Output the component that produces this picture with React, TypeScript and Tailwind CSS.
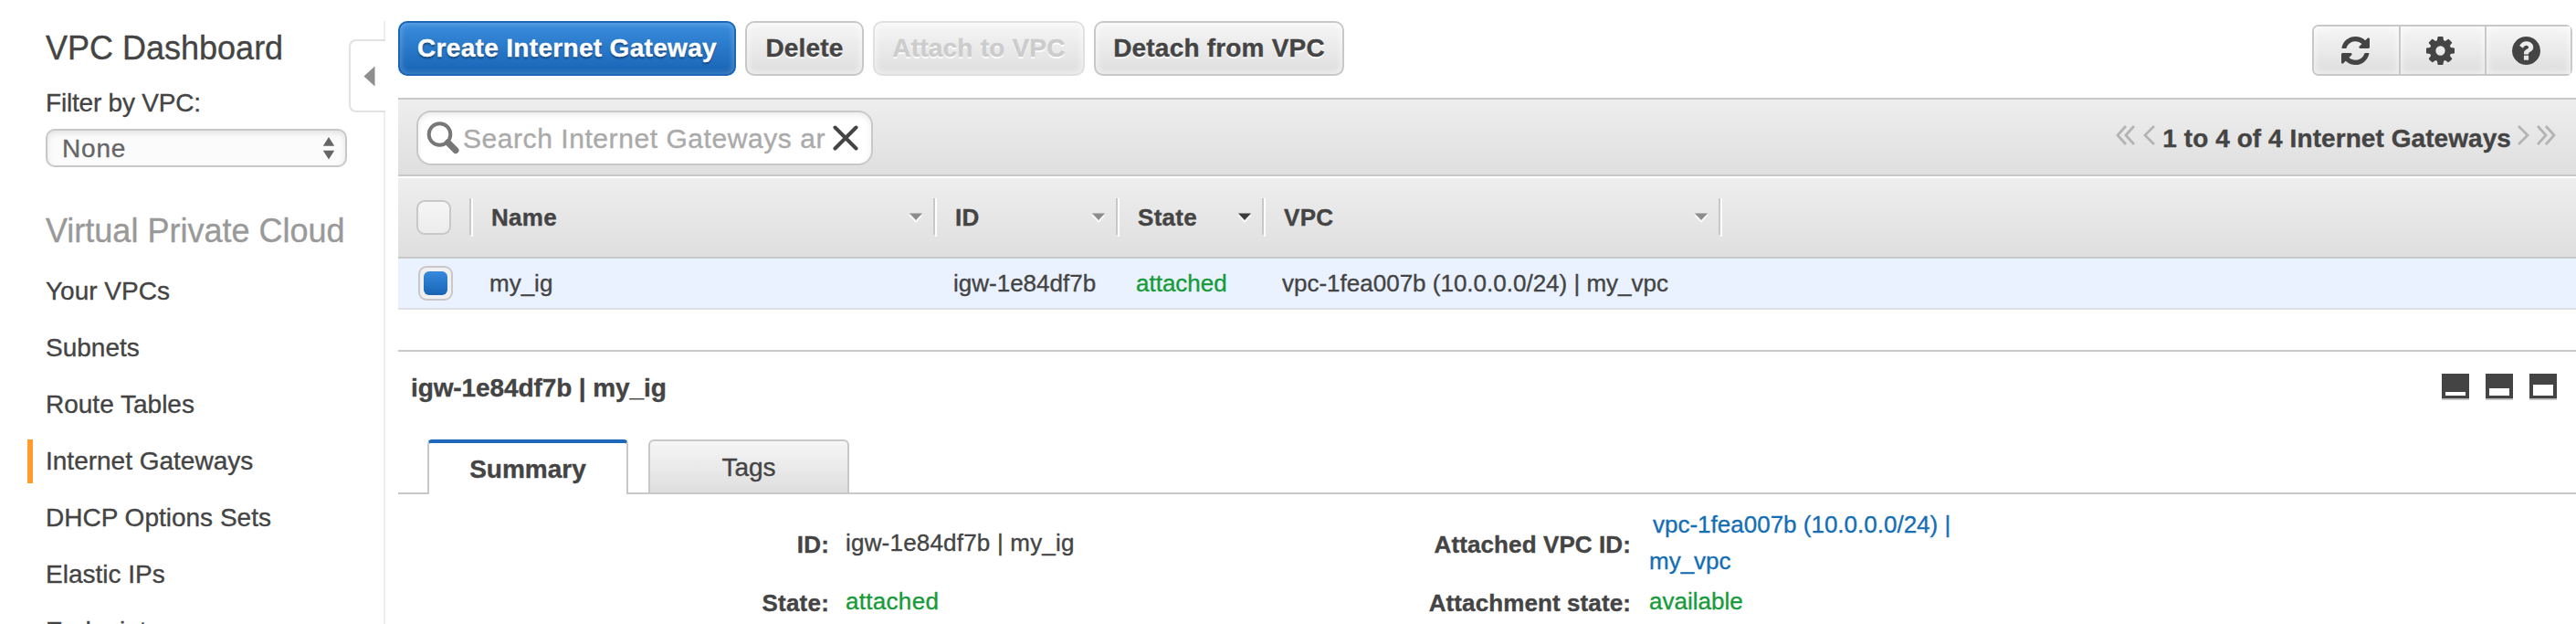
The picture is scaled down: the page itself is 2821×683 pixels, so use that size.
import React from 'react';

const navItems = [
  'Your VPCs',
  'Subnets',
  'Route Tables',
  'Internet Gateways',
  'DHCP Options Sets',
  'Elastic IPs',
  'Endpoints',
];

const REFRESH =
  'M1639 1056q0 5-1 7-64 268-268 434.5t-478 166.5q-146 0-282.5-55t-243.5-157l-129 129q-19 19-45 19t-45-19-19-45v-448q0-26 19-45t45-19h448q26 0 45 19t19 45-19 45l-137 137q71 66 161 102t187 36q134 0 250-65t186-179q11-17 53-117 8-23 30-23h192q13 0 22.5 9.5t9.5 22.5zm25-800v448q0 26-19 45t-45 19h-448q-26 0-45-19t-19-45 19-45l138-138q-148-137-349-137-134 0-250 65t-186 179q-11 17-53 117-8 23-30 23h-199q-13 0-22.5-9.5t-9.5-22.5v-7q65-268 270-434.5t480-166.5q146 0 284 55.5t245 156.5l130-129q19-19 45-19t45 19 19 45z';
const COG =
  'M1024 896q0-106-75-181t-181-75-181 75-75 181 75 181 181 75 181-75 75-181zm512-109v222q0 12-8 23t-20 13l-185 28q-19 54-39 91 35 50 107 138 10 12 10 25t-9 23q-27 37-99 108t-94 71q-12 0-26-9l-138-108q-44 23-91 38-16 136-29 186-7 28-36 28h-222q-14 0-24.5-8.5t-11.5-21.5l-28-184q-49-16-90-37l-141 107q-10 9-25 9-14 0-25-11-126-114-165-168-7-10-7-23 0-12 8-23 15-21 51-66.5t54-70.5q-27-50-41-99l-183-27q-13-2-21-12.5t-8-23.5v-222q0-12 8-23t19-13l186-28q14-46 39-92-40-57-107-138-10-12-10-24 0-10 9-23 26-36 98.5-107.5t94.5-71.5q13 0 26 10l138 107q44-23 91-38 16-136 29-186 7-28 36-28h222q14 0 24.5 8.5t11.5 21.5l28 184q49 16 90 37l142-107q9-9 24-9 13 0 25 10 129 119 165 170 7 8 7 22 0 12-8 23-15 21-51 66.5t-54 70.5q26 50 41 98l183 28q13 2 21 12.5t8 23.5z';
const HELP =
  'M1024 1376v-192q0-14-9-23t-23-9h-192q-14 0-23 9t-9 23v192q0 14 9 23t23 9h192q14 0 23-9t9-23zm256-672q0-88-55.5-163t-138.5-116-170-41q-243 0-371 213-15 24 8 42l132 100q7 6 19 6 16 0 25-12 53-68 86-92 34-24 86-24 48 0 85.5 26t37.5 59q0 38-20 61t-68 45q-63 28-115.5 86.5t-52.5 125.5v36q0 14 9 23t23 9h192q14 0 23-9t9-23q0-19 21.5-49.5t54.5-49.5q32-18 49-28.5t46-35 44.5-48 28-60.5 12.5-81zm384 192q0 209-103 385.5t-279.5 279.5-385.5 103-385.5-103-279.5-279.5-103-385.5 103-385.5 279.5-279.5 385.5-103 385.5 103 279.5 279.5 103 385.5z';

const toolIcons = [
  { name: 'refresh', viewBox: '128 128 1536 1536', d: REFRESH },
  { name: 'settings', viewBox: '0 128 1536 1536', d: COG },
  { name: 'help', viewBox: '128 128 1536 1536', d: HELP },
];

function Sidebar() {
  return (
    <aside className="flex w-[422px] shrink-0">
      <div className="flex w-[382px] shrink-0 flex-col pl-[30px] pt-[34px]">
        <h1 className="pl-5 text-[36px] leading-[37px] whitespace-nowrap">VPC Dashboard</h1>
        <div className="mt-7 pl-5 leading-7 tracking-[-0.2px]">Filter by VPC:</div>
        <div className="mt-3.5 ml-5 flex h-[42px] w-[330px] items-center justify-between rounded-[10px] border-2 border-[#c8c8c8] bg-[#fbfbfb] pr-[11px] pl-[16px] text-[#666] shadow-[inset_0_3px_6px_rgba(0,0,0,0.1)]">
          <span className="mt-0.5 tracking-[0.8px]">None</span>
          <svg width="14" height="26" viewBox="0 0 14 26" fill="#666">
            <path d="M7 1L13.200 10.800H0.800zM7 25.500L0.800 15.700H13.200z" />
          </svg>
        </div>
        <h2 className="mt-[51px] pl-5 text-[36px] leading-[37px] whitespace-nowrap text-[#999]">
          Virtual Private Cloud
        </h2>
        <nav className="mt-[17px] flex flex-col">
          {navItems.map((item) => (
            <a key={item} className="flex h-[62px] items-center whitespace-nowrap">
              <span
                className={
                  item === 'Internet Gateways' ? 'h-12 w-1.5 bg-[#ff9c2d]' : 'h-12 w-1.5'
                }
              />
              <span className="pl-3.5">{item}</span>
            </a>
          ))}
        </nav>
      </div>
      <div className="flex w-10 flex-col pt-[23px]">
        <div className="h-5 border-r-2 border-[#eee]" />
        <div className="flex h-20 items-center rounded-l-[8px] border-2 border-r-0 border-[#e2e2e2] pl-[14px]">
          <svg width="13" height="23" viewBox="0 0 13 23" fill="#8e8e8e">
            <path d="M12.500 0.500V22.500L0.500 11.500z" />
          </svg>
        </div>
        <div className="grow border-r-2 border-[#eee]" />
      </div>
    </aside>
  );
}

function Toolbar() {
  const base =
    'flex h-[60px] items-center justify-center rounded-[10px] border-2 font-bold whitespace-nowrap';
  const gray =
    'bg-linear-to-b from-[#f6f6f6] to-[#dedede] tracking-[0.2px] shadow-[inset_0_0_6px_2px_rgba(255,255,255,0.55)] [text-shadow:0_2px_0_#fff]';
  return (
    <div className="flex h-[107px] items-start justify-between pt-[23px] pr-1">
      <div className="flex gap-[10px]">
        <button
          className={`${base} w-[370px] border-[#1a66b8] bg-linear-to-b from-[#3a8ddd] to-[#1764b5] tracking-[0.32px] text-white shadow-[inset_0_0_6px_1px_rgba(255,255,255,0.25)] [text-shadow:0_2px_2px_rgba(0,0,0,0.4)]`}
        >
          Create Internet Gateway
        </button>
        <button className={`${base} ${gray} w-[130px] border-[#c8c8c8]`}>Delete</button>
        <button className={`${base} ${gray} w-[232px] border-[#e0e0e0] text-[#ccc]`}>
          Attach to VPC
        </button>
        <button className={`${base} ${gray} w-[274px] border-[#c8c8c8]`}>Detach from VPC</button>
      </div>
      <div className="mt-1 flex h-14 rounded-[7px] border-2 border-[#c8c8c8]">
        {toolIcons.map((icon, i) => (
          <button
            key={icon.name}
            aria-label={icon.name}
            className={
              i > 0
                ? 'flex w-[94px] items-center justify-center border-l-2 border-[#c8c8c8] bg-linear-to-b from-[#f6f6f6] to-[#dedede] pr-[5px] shadow-[inset_0_0_6px_2px_rgba(255,255,255,0.55)]'
                : 'flex w-[93px] items-center justify-center rounded-l-[5px] bg-linear-to-b from-[#f6f6f6] to-[#dedede] pr-[3px] shadow-[inset_0_0_6px_2px_rgba(255,255,255,0.55)]'
            }
          >
            <svg width="31" height="31" viewBox={icon.viewBox} fill="#444">
              <path d={icon.d} />
            </svg>
          </button>
        ))}
      </div>
    </div>
  );
}

function Chevrons({ d, width, className }: { d: string; width: number; className?: string }) {
  return (
    <svg
      width={width}
      height="22"
      viewBox={`0 0 ${width} 22`}
      fill="none"
      stroke="#b4b4b4"
      strokeWidth="2.800"
      className={className}
    >
      <path d={d} />
    </svg>
  );
}

function SearchBar() {
  return (
    <div className="flex h-[86px] items-center justify-between border-y-2 border-[#c8c8c8] bg-linear-to-b from-[#eee] to-[#dfdfdf] pr-[22px] pl-5">
      <div className="mt-0.5 flex h-[60px] w-[500px] items-center rounded-[16px] border-2 border-[#c8c8c8] bg-white pl-[9px] shadow-[inset_0_3px_6px_rgba(0,0,0,0.08)]">
        <svg width="36" height="36" viewBox="0 0 36 36" fill="none" stroke="#777">
          <circle cx="14.500" cy="14" r="11.800" strokeWidth="4" />
          <path d="M23.500 23L32 31.500" strokeWidth="7" strokeLinecap="round" />
        </svg>
        <span className="ml-[4px] w-[398px] overflow-hidden text-[30px] tracking-[0.56px] whitespace-nowrap text-[#aaa]">
          Search Internet Gateways ar
        </span>
        <svg
          className="ml-[7px]"
          width="28"
          height="28"
          viewBox="0 0 28 28"
          stroke="#444"
          strokeWidth="4"
          strokeLinecap="round"
        >
          <path d="M2.500 2.500L25.500 25.500M25.500 2.500L2.500 25.500" />
        </svg>
      </div>
      <div className="flex items-center font-bold whitespace-nowrap">
        <Chevrons className="mb-1" width={21} d="M11 1L2 11L11 21M20 1L11 11L20 21" />
        <Chevrons className="mb-1 ml-[9px]" width={13} d="M12 1L2 11L12 21" />
        <span className="mt-1 ml-[8px] tracking-[0.07px]">1 to 4 of 4 Internet Gateways</span>
        <Chevrons className="mb-1 ml-[7px]" width={13} d="M1 1L11 11L1 21" />
        <Chevrons className="mb-1 ml-[8px]" width={21} d="M1 1L10 11L1 21M10 1L19 11L10 21" />
      </div>
    </div>
  );
}

function Divider() {
  return (
    <div className="flex items-start">
      <span className="h-10 w-0.5 bg-[#c8c8c8]" />
      <span className="h-[42px] w-0.5 bg-white" />
    </div>
  );
}

function HeaderCell({ label, active }: { label: string; active?: boolean }) {
  return (
    <div className="flex items-center pl-5 font-bold">
      <span className="grow tracking-[0.3px]">{label}</span>
      <svg width="18" height="14" viewBox="0 0 18 14" className="mr-[10px]">
        <path d="M1 4.500L9 13L17 4.500" fill="#f8f8f8" />
        <path d="M2 2.500H16L9 10z" fill={active ? '#3c3c3c' : '#8c8c8c'} />
      </svg>
      <Divider />
    </div>
  );
}

function Table() {
  const cols = 'grid grid-cols-[82px_508px_200px_160px_500px]';
  return (
    <div className="text-[26px]">
      <div
        className={`${cols} mt-0.5 h-[88px] border-b-2 border-[#c8c8c8] bg-linear-to-b from-[#eee] to-[#dfdfdf]`}
      >
        <div className="flex items-center justify-between pl-5">
          <span className="h-[38px] w-[38px] rounded-[9px] border-2 border-[#c8c8c8] bg-linear-to-b from-[#f6f6f6] to-[#ececec]" />
          <Divider />
        </div>
        <HeaderCell label="Name" />
        <HeaderCell label="ID" />
        <HeaderCell label="State" active />
        <HeaderCell label="VPC" />
      </div>
      <div
        className={`${cols} h-14 items-center border-b-2 border-[#dcdfe6] bg-[#eaf2ff] whitespace-nowrap`}
      >
        <div className="pl-[22px]">
          <span className="flex h-[38px] w-[38px] items-center justify-center rounded-[9px] border-2 border-[#c8c8c8] bg-[#f0f0f0]">
            <span className="h-[26px] w-[26px] rounded-[6px] bg-linear-to-b from-[#368add] to-[#1764b5]" />
          </span>
        </div>
        <div className="pl-[18px]">my_ig</div>
        <div className="pl-[18px]">igw-1e84df7b</div>
        <div className="pl-[18px] text-[#169b39]">attached</div>
        <div className="pl-[18px]">vpc-1fea007b (10.0.0.0/24) | my_vpc</div>
      </div>
    </div>
  );
}

function PaneIcon({ y, h }: { y: number; h: number }) {
  return (
    <svg width="30" height="29" viewBox="0 0 30 29">
      <rect width="30" height="27.500" fill="#444" />
      <rect y="27.500" width="30" height="1.500" fill="#ccc" />
      <rect x="4" y={y} width="22" height={h} fill="#fff" />
    </svg>
  );
}

function Details() {
  return (
    <div className="mt-11 border-t-2 border-[#c8c8c8]">
      <div className="flex h-24 items-start justify-between pr-[21px] pl-[14px] pt-6">
        <div className="mt-0.5 leading-7 font-bold tracking-[-0.1px]">igw-1e84df7b | my_ig</div>
        <div className="flex gap-[18px]">
          <PaneIcon y={20} h={4} />
          <PaneIcon y={16} h={8} />
          <PaneIcon y={12} h={12} />
        </div>
      </div>
      <div className="flex h-[60px]">
        <div className="w-8 border-b-2 border-[#c8c8c8]" />
        <div className="flex w-[220px] items-center justify-center rounded-t-[5px] border-x-2 border-t-4 border-x-[#c8c8c8] border-t-[#1d68bb] pt-0.5 font-bold">
          Summary
        </div>
        <div className="w-[22px] border-b-2 border-[#c8c8c8]" />
        <div className="flex w-[220px] items-center justify-center rounded-t-[6px] border-2 border-[#c8c8c8] bg-linear-to-b from-[#f6f6f6] to-[#dedede] pt-0.5">
          Tags
        </div>
        <div className="grow border-b-2 border-[#c8c8c8]" />
      </div>
      <div className="grid grid-cols-[472px_408px_470px_402px] pt-[13px] text-[26px] leading-10 whitespace-nowrap">
        <div className="mt-1 self-center text-right font-bold tracking-[0.2px]">ID:</div>
        <div className="self-center pl-[18px] tracking-[0.2px]">igw-1e84df7b | my_ig</div>
        <div className="mt-1 self-center text-right font-bold tracking-[0.1px]">
          Attached VPC ID:
        </div>
        <div className="pl-[20px] text-[#146eb4]">
          <div className="h-10 pl-1">vpc-1fea007b (10.0.0.0/24) |</div>
          <div>my_vpc</div>
        </div>
        <div className="h-[60px] pt-[6px] text-right font-bold tracking-[0.2px]">State:</div>
        <div className="pt-1 pl-[18px] tracking-[0.3px] text-[#169b39]">attached</div>
        <div className="pt-[6px] text-right font-bold tracking-[0.1px]">Attachment state:</div>
        <div className="pt-1 pl-[20px] text-[#169b39]">available</div>
      </div>
    </div>
  );
}

export default function App() {
  return (
    <div className="flex h-[683px] w-full overflow-hidden bg-white font-['Liberation_Sans',Arial,sans-serif] text-[28px] text-[#444] [-webkit-text-stroke:0.35px]">
      <Sidebar />
      <main className="ml-[14px] min-w-0 grow">
        <Toolbar />
        <SearchBar />
        <Table />
        <Details />
      </main>
    </div>
  );
}
